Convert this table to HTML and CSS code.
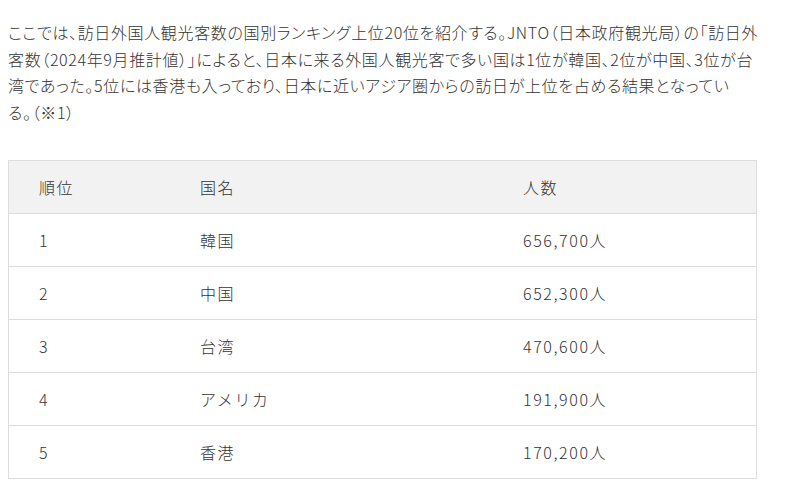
FILE: index.html
```html
<!DOCTYPE html>
<html lang="ja">
<head>
<meta charset="utf-8">
<link rel="stylesheet" href="styles.css">
</head>
<body>
<div class="content">
<p class="lead">ここでは、訪日外国人観光客数の国別ランキング上位20位を紹介する。JNTO（日本政府観光局）の「訪日外<br>客数（2024年9月推計値）」によると、日本に来る外国人観光客で多い国は1位が韓国、2位が中国、3位が台<br>湾であった。5位には香港も入っており、日本に近いアジア圏からの訪日が上位を占める結果となってい<br>る。（※1）</p>
<table class="rank">
<thead>
<tr><th class="c1">順位</th><th class="c2">国名</th><th class="c3">人数</th></tr>
</thead>
<tbody>
<tr><td>1</td><td>韓国</td><td>656,700人</td></tr>
<tr><td>2</td><td>中国</td><td>652,300人</td></tr>
<tr><td>3</td><td>台湾</td><td>470,600人</td></tr>
<tr><td>4</td><td>アメリカ</td><td>191,900人</td></tr>
<tr><td>5</td><td>香港</td><td>170,200人</td></tr>
</tbody>
</table>
</div>
</body>
</html>
```
FILE: styles.css
```css
html, body {
  margin: 0;
  padding: 0;
  background: #fff;
}
body {
  font-family: "Noto Sans CJK JP", "Noto Sans", sans-serif;
  color: #333;
  font-size: 16px;
  font-weight: 300;
}
.content {
  padding: 19px 30px 0 8px;
}
.lead {
  margin: 0 0 34px;
  width: 760px;
  line-height: 26.7px;
  letter-spacing: 0.04em;
  font-feature-settings: "palt";
}
.rank {
  width: 749px;
  border-collapse: collapse;
  border-left: 1px solid #ddd;
  border-right: 1px solid #ddd;
  letter-spacing: 0.1em;
}
.rank th, .rank td {
  text-align: left;
  font-weight: 300;
  padding: 0 0 0 30px;
  height: 52px;
  border-top: 1px solid #ddd;
  border-bottom: 1px solid #ddd;
}
.rank thead th {
  background: #f2f2f2;
}
.rank .c1 { width: 131px; }
.rank .c2 { width: 293px; }
```
